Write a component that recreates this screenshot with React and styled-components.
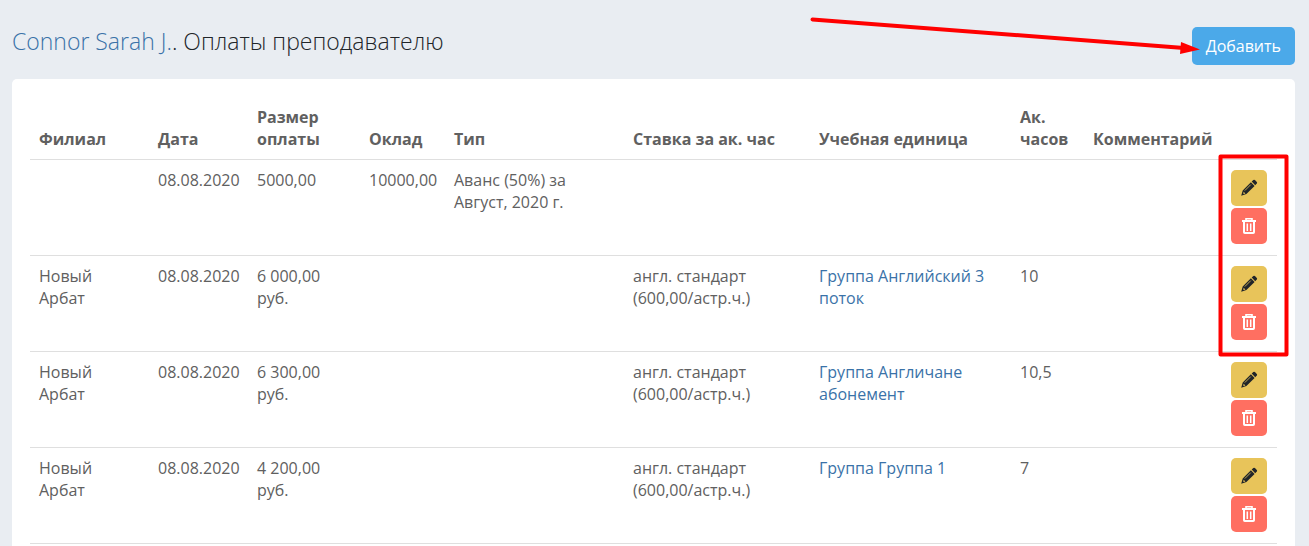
import React from 'react';
import styled, { createGlobalStyle, ThemeProvider } from 'styled-components';

const theme = {
  colors: {
    page: '#e9edf2',
    card: '#ffffff',
    text: '#606060',
    title: '#212529',
    link: '#3a72a8',
    border: '#dfdfdf',
    primary: '#4ba9e9',
    warning: '#e8c45a',
    danger: '#ff6f61',
    mark: '#ff0000',
  },
};

const GlobalStyle = createGlobalStyle`
  * {
    box-sizing: border-box;
  }

  body {
    margin: 0;
    background: ${props => props.theme.colors.page};
    color: ${props => props.theme.colors.text};
    font-family: 'Open Sans', 'Noto Sans', sans-serif;
    font-size: 16px;
    line-height: 22px;
  }
`;

const Page = styled.main`
  position: relative;
  display: flex;
  flex-direction: column;
  min-height: 100vh;
  padding: 0 14px 0 12px;
`;

const Header = styled.header`
  display: flex;
  justify-content: space-between;
  align-items: center;
  padding: 27px 0 14px;
`;

const Title = styled.h1`
  margin: 0;
  padding-bottom: 10px;
  color: ${props => props.theme.colors.title};
  font-size: 23px;
  font-weight: 350;
  line-height: 28px;
`;

const Link = styled.a`
  color: ${props => props.theme.colors.link};
  text-decoration: none;
`;

const AddButton = styled.button`
  height: 38px;
  padding: 0 14px;
  border: none;
  border-radius: 5px;
  background: ${props => props.theme.colors.primary};
  color: #fff;
  font: inherit;
  cursor: pointer;
`;

const Card = styled.section`
  flex: 1;
  padding: 18px 18px 0;
  border-radius: 5px 5px 0 0;
  background: ${props => props.theme.colors.card};
`;

const Table = styled.table`
  width: 100%;
  table-layout: fixed;
  border-spacing: 0;
  border-bottom: 1px solid ${props => props.theme.colors.border};
`;

const HeadCell = styled.th`
  width: ${props => props.$width}px;
  padding: 9px;
  font-weight: 700;
  text-align: left;
  vertical-align: bottom;
  white-space: ${props => (props.$wrap ? 'normal' : 'nowrap')};
`;

const Cell = styled.td`
  padding: 9px 9px 11px;
  border-top: 1px solid ${props => props.theme.colors.border};
  font-weight: 400;
  vertical-align: top;
`;

const Actions = styled.div`
  display: flex;
  flex-direction: column;
  gap: 2px;
  padding-top: 1px;
`;

const IconButton = styled.button`
  display: flex;
  align-items: center;
  justify-content: center;
  width: 36px;
  height: 36px;
  padding: 0;
  border: none;
  border-radius: 5px;
  background: ${props => props.theme.colors[props.$variant]};
  color: ${props => (props.$variant === 'danger' ? '#fff' : props.theme.colors.title)};
  cursor: pointer;
`;

const Marks = styled.svg`
  position: absolute;
  top: 0;
  right: 0;
  pointer-events: none;
`;

const PencilIcon = () => (
  <svg width="18" height="18" viewBox="0 0 18 18" fill="currentColor" aria-hidden="true">
    <path d="M11.7 2.6 13.3 1Q14.1.4 14.9 1.1L16.8 3Q17.5 3.8 16.8 4.6L15.2 6.2Z" />
    <path d="M10.9 3.3 14.6 7 6.4 15.1 1.2 16.8 2.7 11.4ZM3.7 12.8 3.2 14.4 3.9 15 5.4 14.4Z" fillRule="evenodd" />
    <path d="M4.8 11.6 10.8 5.6" stroke="#e8c45a" strokeWidth=".8" />
  </svg>
);

const TrashIcon = () => (
  <svg width="18" height="18" viewBox="0 0 18 18" fill="none" stroke="currentColor" aria-hidden="true">
    <path d="M2 4H16" strokeWidth="2" />
    <path d="M6 3.5V1.7H12V3.5" strokeWidth="1.6" />
    <path d="M4 4V15.2Q4 16 4.8 16H13.2Q14 16 14 15.2V4" strokeWidth="2" />
    <path d="M7.3 6.5V14M10.7 6.5V14" strokeWidth="1.5" />
  </svg>
);

const columns = [
  { title: 'Филиал', width: 119 },
  { title: 'Дата', width: 99 },
  { title: 'Размер оплаты', width: 112, wrap: true },
  { title: 'Оклад', width: 85 },
  { title: 'Тип', width: 179 },
  { title: 'Ставка за ак. час', width: 186 },
  { title: 'Учебная единица', width: 201 },
  { title: 'Ак. часов', width: 73, wrap: true },
  { title: 'Комментарий', width: 138 },
  { title: '', width: 55 },
];

const payments = [
  { id: 1, date: '08.08.2020', amount: ['5000,00'], salary: '10000,00', type: ['Аванс (50%) за', 'Август, 2020 г.'] },
  { id: 2, branch: ['Новый', 'Арбат'], date: '08.08.2020', amount: ['6 000,00', 'руб.'], rate: ['англ. стандарт', '(600,00/астр.ч.)'], unit: ['Группа Английский 3', 'поток'], hours: '10' },
  { id: 3, branch: ['Новый', 'Арбат'], date: '08.08.2020', amount: ['6 300,00', 'руб.'], rate: ['англ. стандарт', '(600,00/астр.ч.)'], unit: ['Группа Англичане', 'абонемент'], hours: '10,5' },
  { id: 4, branch: ['Новый', 'Арбат'], date: '08.08.2020', amount: ['4 200,00', 'руб.'], rate: ['англ. стандарт', '(600,00/астр.ч.)'], unit: ['Группа Группа 1'], hours: '7' },
];

const Lines = ({ items = [] }) =>
  items.map((item, index) => (
    <React.Fragment key={item}>
      {index > 0 && <br />}
      {item}
    </React.Fragment>
  ));

const PaymentRow = ({ payment }) => (
  <tr>
    <Cell><Lines items={payment.branch} /></Cell>
    <Cell>{payment.date}</Cell>
    <Cell><Lines items={payment.amount} /></Cell>
    <Cell>{payment.salary}</Cell>
    <Cell><Lines items={payment.type} /></Cell>
    <Cell><Lines items={payment.rate} /></Cell>
    <Cell>{payment.unit && <Link href="#unit"><Lines items={payment.unit} /></Link>}</Cell>
    <Cell>{payment.hours}</Cell>
    <Cell />
    <Cell>
      <Actions>
        <IconButton $variant="warning" type="button" aria-label="Редактировать"><PencilIcon /></IconButton>
        <IconButton $variant="danger" type="button" aria-label="Удалить"><TrashIcon /></IconButton>
      </Actions>
    </Cell>
  </tr>
);

const App = () => (
  <ThemeProvider theme={theme}>
    <GlobalStyle />
    <Page>
      <Header>
        <Title><Link href="#teacher">Connor Sarah J.</Link>. Оплаты преподавателю</Title>
        <AddButton type="button">Добавить</AddButton>
      </Header>

      <Card>
        <Table>
          <thead>
            <tr>
              {columns.map(column => (
                <HeadCell key={column.title} $width={column.width} $wrap={column.wrap}>{column.title}</HeadCell>
              ))}
            </tr>
          </thead>
          <tbody>
            {payments.map(payment => (
              <PaymentRow key={payment.id} payment={payment} />
            ))}
          </tbody>
        </Table>
      </Card>

      {/* arrow to the add button and frame around the row actions */}
      <Marks width="509" height="370" viewBox="800 0 509 370" fill="none" stroke={theme.colors.mark} aria-hidden="true">
        <path d="M812.5 19.5 1184 48" strokeWidth="4" strokeLinecap="round" />
        <path d="M1181 42 1200 49.5 1180 54Z" fill={theme.colors.mark} stroke="none" />
        <rect x="1220.5" y="156.5" width="66" height="198" strokeWidth="4" strokeLinejoin="round" />
      </Marks>
    </Page>
  </ThemeProvider>
);

export default App;
